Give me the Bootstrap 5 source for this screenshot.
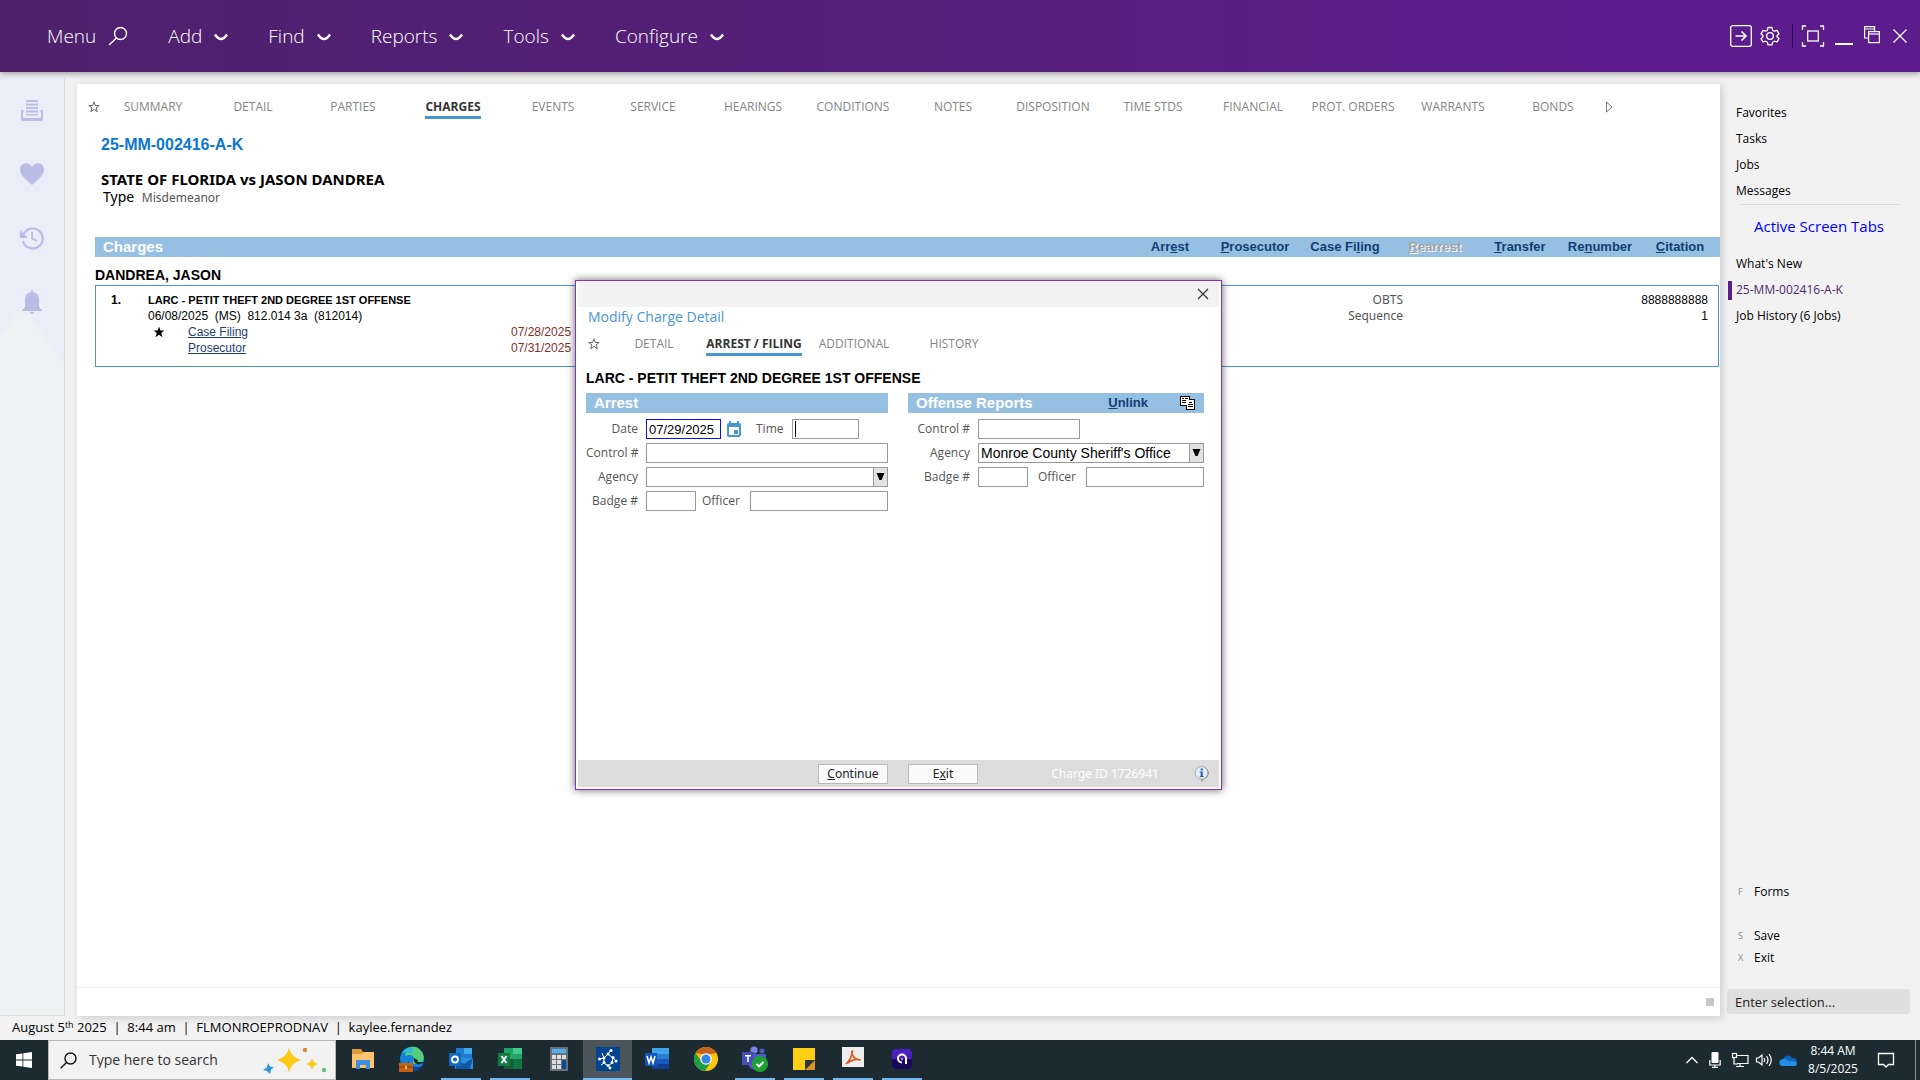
<!DOCTYPE html>
<html lang="en">
<head>
    <meta charset="UTF-8">
    <meta name="viewport" content="width=device-width, initial-scale=1.0">
    <title>Modify Charge Detail</title>
    <link href="https://cdn.jsdelivr.net/npm/bootstrap@5.3.0/dist/css/bootstrap.min.css" rel="stylesheet">
    <style>
        body {
            background-color: #f2f2f2;
            color: #000;
            font-family: "Open Sans", "Noto Sans", sans-serif;
            font-size: 12px;
            line-height: 16px;
        }
        a { color: inherit; text-decoration: none; }
        svg { display: block; flex: none; }
        button { font: inherit; }
        .arial { font-family: "Liberation Sans", Arial, sans-serif; }
        .tahoma { font-family: "Noto Sans", Tahoma, sans-serif; }

        /* top menu */
        .topbar {
            height: 72px;
            padding: 0 13px 0 47px;
            background: linear-gradient(90deg, #4e216c, #541f78 40%, #5c1c8c 85%);
            box-shadow: 0 2px 6px rgba(0, 0, 0, .35);
            color: #fff;
            z-index: 2;
        }
        .menu-link {
            border: 0;
            padding: 0;
            background: none;
            color: #fff;
            font-size: 19px;
            font-weight: 300;
            line-height: 28px;
        }
        .tool-btn { border: 0; padding: 0; background: none; color: #fff; }
        .tool-sep { width: 1px; height: 24px; background: #2b0a66; }

        /* left rail */
        .rail {
            width: 65px;
            margin-top: 6px;
            padding-top: 20px;
            gap: 40px;
            color: #b9bde6;
            border-right: 1px solid #dcdcdc;
            border-bottom: 1px solid #dcdcdc;
            background: conic-gradient(from 144deg at 22px 228px, #eef2f3 72deg, transparent 0), linear-gradient(#ebeef8 300px, #eef2f3 301px);
        }

        /* main sheet */
        .sheet {
            margin: 12px 6px 0 12px;
            background: #fff;
            box-shadow: 2px 2px 8px rgba(0, 0, 0, .16);
            min-width: 0;
        }
        .tabs { color: #858585; }
        .case-tabs { padding-top: 15px; }
        .tab-cell { width: 100px; text-align: center; }
        .tab-cell a { display: inline-block; padding-bottom: 1px; border-bottom: 3px solid transparent; }
        .tab-cell a.current { color: #333; font-weight: 700; border-color: #4a96d2; }
        .case-no { color: #0b78d0; font-size: 16px; line-height: 20px; }
        .style-line { font-size: 15px; line-height: 18px; padding-top: 15px; }
        .type-line { font-size: 14px; line-height: 18px; padding-left: 2px; }
        .type-line span { font-size: 12px; }
        .charges { padding: 30px 0 0 18px; }
        .bluebar { background: #96c0e2; color: #fff; font-weight: 700; font-size: 15px; line-height: 20px; padding-left: 8px; }
        .bar-links { color: #0f3f73; font-size: 13px; text-align: center; }
        .bar-links a { width: 80px; }
        .bar-links a.wide { width: 90px; }
        .bar-links a.off { color: #a5a5a5; text-shadow: 1px 1px 0 #fff; }
        .defendant { font-size: 14px; line-height: 20px; }
        .charge-box { border: 1px solid #4a96d2; height: 82px; margin-right: 1px; padding: 6px 10px 0 15px; }
        .charge-title { font-size: 11px; }
        .charge-link { color: #1d3f70; text-decoration: underline; width: 323px; }
        .charge-date { color: #8b2c2c; }
        .col-num { width: 37px; }
        .col-star { width: 40px; padding-left: 5px; }
        .col-val { width: 305px; }
        .muted-label { color: #555; }
        .sheet-foot { height: 29px; border-top: 1px solid #ececec; padding-right: 6px; }
        .grip { width: 8px; height: 8px; background: #c8c8c8; }

        /* dialog */
        .dialog-layer { top: 196px; left: 0; right: 0; }
        .dlg {
            width: 647px;
            height: 510px;
            border: 1px solid #8d30bd;
            background: #fff;
            box-shadow: 0 0 8px rgba(0, 0, 0, .6);
            padding: 0 2px 2px;
        }
        .dlg-top { background: #f2f2f2; height: 26px; padding-right: 10px; }
        .dlg-title { color: #4a96d2; font-size: 14px; line-height: 20px; padding-left: 10px; }
        .dlg-tabs { padding-top: 9px; }
        .dlg-head { font-size: 14px; line-height: 16px; padding: 14px 0 7px 8px; }
        .pane-left { width: 302px; }
        .pane-right { width: 296px; }
        .dlg .bluebar { margin-bottom: 6px; }
        .f-row { height: 20px; margin-bottom: 4px; }
        .f-label { width: 60px; padding-right: 8px; text-align: right; color: #555; white-space: nowrap; flex: none; }
        .pane-right .f-label { width: 70px; }
        .f-label2 { color: #555; }
        .f-officer { margin: 0 10px; }
        .pane-left .f-officer { margin-left: 6px; }
        .f-cal { margin: 0 7px 0 6px; }
        .f-box {
            height: 20px;
            border: 1px solid #999;
            border-radius: 0;
            background-color: #fff;
            padding: 0 2px;
            font-family: "Liberation Sans", Arial, sans-serif;
            font-size: 14px;
            line-height: 18px;
            color: #000;
            min-width: 0;
            outline: 0;
        }
        .f-date { width: 75px; border-color: #1010d8; font-size: 13px; }
        .f-time { width: 67px; background-image: linear-gradient(#000, #000); background-size: 1px 16px; background-position: 2px 1px; background-repeat: no-repeat; }
        .f-badge { width: 50px; flex: none; }
        .f-ctl { width: 102px; }
        .f-fill { width: 0; }
        .f-drop {
            appearance: none;
            background-repeat: no-repeat;
            background-position: right 0 center;
            background-image: url("data:image/svg+xml,%3Csvg xmlns='http://www.w3.org/2000/svg' width='14' height='18'%3E%3Cpath fill='%23e2e2e2' d='M0 0h14v18H0z'/%3E%3Cpath fill='%23999' d='M0 0h1v18H0z'/%3E%3Cpath d='M3.500 5h8l-3 7h-2z'/%3E%3C/svg%3E");
        }
        .dlg-foot { height: 27px; background: #dcdcdc; }
        .dlg-btn { width: 70px; height: 20px; border: 1px solid #b9b9b9; background: #fafafa; padding: 0; line-height: 18px; color: #222; }
        .foot-mid { gap: 20px; padding-left: 240px; }
        .foot-side { gap: 35px; padding-right: 9px; color: #fff; }

        /* right side */
        .side { width: 194px; padding: 28px 10px 2px 0; }
        .side-item { padding-left: 10px; line-height: 26px; }
        .side-item.current { color: #4c2a6c; }
        .side-item.current::before { content: ""; position: absolute; left: 2px; top: 4px; bottom: 3px; width: 4px; background: #5c1c8c; }
        .side-rule { height: 1px; background: #dcdcdc; margin: 0 10px 0 14px; }
        .side-title { color: #00f; font-size: 15px; line-height: 42px; padding: 0 0 4px 28px; }
        .side-key { width: 16px; color: #8a8a8a; font-size: 9px; }
        .side-keys { padding-left: 12px; line-height: 22px; }
        .side-save { margin-top: 22px; }
        .side-select { border: 0; border-radius: 4px; background: #dfdfdf; height: 25px; padding: 0 8px; margin-left: 1px; font-size: 13px; }
        .side-select::placeholder { color: #222; }

        /* status line and task bar */
        .status { height: 24px; padding-left: 12px; font-size: 13px; line-height: 22px; }
        .status sup { font-size: 9px; top: -4px; line-height: 0; }
        .taskbar { height: 40px; background: #1b2b31; color: #fff; }
        .start { width: 48px; border: 0; background: none; }
        .tb-search { width: 288px; background: #f2f2f2; border: 1px solid #b8b8b8; padding-left: 11px; }
        .tb-search input { border: 0; background: none; font-size: 14px; width: 140px; padding: 0; outline: 0; }
        .tb-search input::placeholder { color: #333; }
        .tb-apps { padding-left: 2px; }
        .tb-app { width: 49px; height: 40px; border: 0; padding: 0 0 2px; background: none; }
        .tb-app.open { background: linear-gradient(#76b9ed, #76b9ed) center bottom / 40px 2px no-repeat; }
        .tb-app.active { background: linear-gradient(#76b9ed, #76b9ed) center bottom / 100% 2px no-repeat #4b545b; }
        .tray { gap: 6px; padding-right: 20px; }
        .clock { line-height: 18px; width: 60px; text-align: center; }
        .tb-edge { width: 5px; border-left: 1px solid #8a9296; }
    </style>
</head>
<body class="vh-100 d-flex flex-column overflow-hidden">
    <!-- Top menu -->
    <header class="topbar d-flex align-items-center justify-content-between">
        <nav class="d-flex align-items-center gap-4" aria-label="Main menu">
            <button class="menu-link d-flex align-items-center gap-2 me-3" type="button">Menu
                <svg class="ms-1" width="20" height="20" viewBox="0 0 20 20" fill="none" stroke="#fff" stroke-width="1.400"><circle cx="12.500" cy="7.500" r="6"/><path d="M8.500 12 1 19"/></svg>
            </button>
            <button class="menu-link d-flex align-items-center gap-2 me-3" type="button">Add <svg class="ms-1" width="14" height="10" viewBox="0 0 14 10" fill="none" stroke="#fff" stroke-width="2.400"><path d="M1 3.500q3 4.500 6 4.500t6-4.500"/></svg></button>
            <button class="menu-link d-flex align-items-center gap-2 me-3" type="button">Find <svg class="ms-1" width="14" height="10" viewBox="0 0 14 10" fill="none" stroke="#fff" stroke-width="2.400"><path d="M1 3.500q3 4.500 6 4.500t6-4.500"/></svg></button>
            <button class="menu-link d-flex align-items-center gap-2 me-3" type="button">Reports <svg class="ms-1" width="14" height="10" viewBox="0 0 14 10" fill="none" stroke="#fff" stroke-width="2.400"><path d="M1 3.500q3 4.500 6 4.500t6-4.500"/></svg></button>
            <button class="menu-link d-flex align-items-center gap-2 me-3" type="button">Tools <svg class="ms-1" width="14" height="10" viewBox="0 0 14 10" fill="none" stroke="#fff" stroke-width="2.400"><path d="M1 3.500q3 4.500 6 4.500t6-4.500"/></svg></button>
            <button class="menu-link d-flex align-items-center gap-2" type="button">Configure <svg class="ms-1" width="14" height="10" viewBox="0 0 14 10" fill="none" stroke="#fff" stroke-width="2.400"><path d="M1 3.500q3 4.500 6 4.500t6-4.500"/></svg></button>
        </nav>
        <div class="d-flex align-items-center gap-2">
            <button class="tool-btn" type="button" aria-label="Sign in"><svg width="22" height="22" viewBox="0 0 22 22" fill="none" stroke="#fff" stroke-width="1.300"><rect x=".7" y=".7" width="20.600" height="20.600" rx="2"/><path stroke-width="1.700" d="M5.500 11h10.500M11.500 6.500 16 11l-4.500 4.500"/></svg></button>
            <button class="tool-btn me-1" type="button" aria-label="Settings"><svg width="20" height="20" viewBox="0 0 20 20" fill="none" stroke="#fff" stroke-width="1.300" stroke-linejoin="round"><path d="M8 1.500h4l.6 2.700 1.700 1 2.700-.8 2 3.400-2 1.900v1l2 1.900-2 3.400-2.700-.8-1.700 1-.6 2.700H8l-.6-2.700-1.700-1-2.700.8-2-3.400 2-1.900v-1L1 7.800l2-3.400 2.700.8 1.700-1z"/><circle cx="10" cy="10" r="3.300"/></svg></button>
            <div class="tool-sep"></div>
            <button class="tool-btn" type="button" aria-label="Full screen"><svg width="24" height="22" viewBox="0 0 24 22" fill="none" stroke="#fff" stroke-width="1.300"><path d="M5 1H1.500v4M19 1h3.500v4M5 21H1.500v-4M19 21h3.500v-4"/><rect x="6.700" y="6" width="10.600" height="10"/></svg></button>
            <button class="tool-btn" type="button" aria-label="Minimize"><svg width="22" height="22" viewBox="0 0 22 22"><path fill="#fff" d="M2 18h18v2H2z"/></svg></button>
            <button class="tool-btn me-1" type="button" aria-label="Restore"><svg width="18" height="20" viewBox="0 0 18 20" fill="none" stroke="#fff" stroke-width="1.200"><path d="M5 12H1.600V.6h10V5M1.600 3h10"/><rect x="5.600" y="5.600" width="10.800" height="11"/><path d="M5.600 8h10.800"/></svg></button>
            <button class="tool-btn" type="button" aria-label="Close"><svg width="14" height="14" viewBox="0 0 14 14" stroke="#fff" stroke-width="1.300"><path d="m.5.5 13 13m0-13-13 13"/></svg></button>
        </div>
    </header>

    <div class="d-flex flex-grow-1">
        <!-- Left rail -->
        <aside class="rail d-flex flex-column align-items-center flex-shrink-0">
            <svg width="24" height="24" viewBox="0 0 24 24" fill="currentColor"><path d="M6 2h12v2H6zM6 5.500h12v2H6zM6 9h12v2H6zM6 12.500h12v2H6zM6 16h12v1.500H6zM1 12h3v1.500H3V20h18v-6.500h-1V12h3v9q0 2-2 2H3q-2 0-2-2z"/></svg>
            <svg width="24" height="24" viewBox="0 0 24 24" fill="currentColor"><path d="M12 23C6 17.500 0 13 0 7.500 0 4 2.800 1.300 6.200 1.300 8.600 1.300 11 2.700 12 4.800c1-2.100 3.400-3.500 5.800-3.500C21.200 1.300 24 4 24 7.500 24 13 18 17.500 12 23z"/></svg>
            <svg width="24" height="24" viewBox="0 0 24 24" fill="none" stroke="currentColor" stroke-width="2.200"><path d="M3.500 8.500A10 10 0 1 1 3 15"/><path fill="currentColor" stroke="none" d="M0 4v8h8z"/><path stroke-width="1.800" d="M12 6v6.500l5 2.500"/></svg>
            <svg width="24" height="24" viewBox="0 0 24 24" fill="currentColor"><path d="M11 0h2v2c4 .7 6 4 6 8v7l3 3v1H2v-1l3-3v-7c0-4 2-7.300 6-8zM9.800 22h4.400q-.5 2-2.200 2t-2.200-2z"/></svg>
        </aside>

        <!-- Case sheet -->
        <main class="sheet flex-grow-1 d-flex flex-column position-relative">
            <nav class="tabs case-tabs d-flex align-items-start" aria-label="Case tabs">
                <svg class="ms-2" width="18" height="16" viewBox="-3 -2 18 16" fill="none" stroke="#666" stroke-width="1"><path d="m6 .8 1.300 3.700h3.900L8.100 6.800l1.200 3.900L6 8.400l-3.300 2.300 1.200-3.900L.8 4.500h3.900z"/></svg>
                <div class="tab-cell"><a href="#">SUMMARY</a></div>
                <div class="tab-cell"><a href="#">DETAIL</a></div>
                <div class="tab-cell"><a href="#">PARTIES</a></div>
                <div class="tab-cell"><a href="#" class="current">CHARGES</a></div>
                <div class="tab-cell"><a href="#">EVENTS</a></div>
                <div class="tab-cell"><a href="#">SERVICE</a></div>
                <div class="tab-cell"><a href="#">HEARINGS</a></div>
                <div class="tab-cell"><a href="#">CONDITIONS</a></div>
                <div class="tab-cell"><a href="#">NOTES</a></div>
                <div class="tab-cell"><a href="#">DISPOSITION</a></div>
                <div class="tab-cell"><a href="#">TIME STDS</a></div>
                <div class="tab-cell"><a href="#">FINANCIAL</a></div>
                <div class="tab-cell"><a href="#">PROT. ORDERS</a></div>
                <div class="tab-cell"><a href="#">WARRANTS</a></div>
                <div class="tab-cell"><a href="#">BONDS</a></div>
                <svg width="12" height="16" viewBox="0 -2 12 16" fill="none" stroke="#777"><path d="M3.500 1v10L9 6z"/></svg>
            </nav>
            <div class="ps-4 pt-3">
                <div class="case-no arial fw-bold">25-MM-002416-A-K</div>
                <div class="style-line tahoma fw-bold">STATE OF FLORIDA vs JASON DANDREA</div>
                <div class="type-line tahoma">Type <span class="muted-label ms-1">Misdemeanor</span></div>
            </div>
            <div class="charges">
                <div class="bluebar arial d-flex justify-content-between">
                    <span>Charges</span>
                    <div class="bar-links d-flex">
                        <a href="#">Arr<u>e</u>st</a>
                        <a href="#" class="wide"><u>P</u>rosecutor</a>
                        <a href="#" class="wide">Case Fi<u>l</u>ing</a>
                        <a href="#" class="wide off"><u>R</u>earrest</a>
                        <a href="#"><u>T</u>ransfer</a>
                        <a href="#">Re<u>n</u>umber</a>
                        <a href="#"><u>C</u>itation</a>
                    </div>
                </div>
                <div class="defendant arial fw-bold pt-2">DANDREA, JASON</div>
                <div class="charge-box arial d-flex">
                    <div class="col-num fw-bold">1.</div>
                    <div class="flex-grow-1">
                        <div class="charge-title fw-bold">LARC - PETIT THEFT 2ND DEGREE 1ST OFFENSE</div>
                        <div>06/08/2025&nbsp; (MS)&nbsp; 812.014 3a&nbsp; (812014)</div>
                        <div class="d-flex">
                            <div class="col-star"><svg width="12" height="16" viewBox="0 -2 12 16"><path d="m6 .5 1.400 4h4.100L8.200 7l1.300 4.200L6 8.700l-3.500 2.500L3.800 7 .5 4.500h4.100z"/></svg></div>
                            <div class="charge-link"><a href="#">Case Filing</a></div>
                            <div class="charge-date">07/28/2025</div>
                        </div>
                        <div class="d-flex">
                            <div class="col-star"></div>
                            <div class="charge-link"><a href="#">Prosecutor</a></div>
                            <div class="charge-date">07/31/2025</div>
                        </div>
                    </div>
                    <div class="muted-label tahoma text-end">OBTS<br>Sequence</div>
                    <div class="col-val text-end">8888888888<br>1</div>
                </div>
            </div>
            <div class="sheet-foot d-flex align-items-center justify-content-end mt-auto"><div class="grip"></div></div>

            <!-- Modify Charge Detail dialog -->
            <div class="dialog-layer position-absolute d-flex justify-content-center">
                <section class="dlg d-flex flex-column" role="dialog" aria-label="Modify Charge Detail">
                    <div class="dlg-top d-flex align-items-center justify-content-end">
                        <button class="tool-btn" type="button" aria-label="Close dialog"><svg width="12" height="12" viewBox="0 0 12 12" stroke="#333" stroke-width="1.200"><path d="m1 1 10 10m0-10L1 11"/></svg></button>
                    </div>
                    <div class="dlg-title">Modify Charge Detail</div>
                    <nav class="tabs dlg-tabs d-flex align-items-start" aria-label="Charge tabs">
                        <svg class="ms-2" width="18" height="16" viewBox="-2 -2 18 16" fill="none" stroke="#666" stroke-width="1"><path d="m6 .8 1.300 3.700h3.900L8.100 6.800l1.200 3.900L6 8.400l-3.300 2.300 1.200-3.900L.8 4.500h3.900z"/></svg>
                        <div class="tab-cell"><a href="#">DETAIL</a></div>
                        <div class="tab-cell"><a href="#" class="current">ARREST / FILING</a></div>
                        <div class="tab-cell"><a href="#">ADDITIONAL</a></div>
                        <div class="tab-cell"><a href="#">HISTORY</a></div>
                    </nav>
                    <div class="dlg-head arial fw-bold">LARC - PETIT THEFT 2ND DEGREE 1ST OFFENSE</div>
                    <div class="d-flex ps-2">
                        <div class="pane-left me-3">
                            <div class="bluebar arial">Arrest</div>
                            <div class="f-row d-flex align-items-center">
                                <label class="f-label" for="a-date">Date</label>
                                <input class="f-box f-date" id="a-date" type="text" value="07/29/2025">
                                <button class="tool-btn f-cal" type="button" aria-label="Pick date"><svg width="14" height="16" viewBox="0 0 14 16"><path fill="#4a96d2" fill-rule="evenodd" d="M2 0h2v2h6V0h2v2q2 0 2 2v10q0 2-2 2H2q-2 0-2-2V4q0-2 2-2zM2 6v8h10V6zM7 9h4v4H7z"/></svg></button>
                                <label class="f-label2 mx-2" for="a-time">Time</label>
                                <input class="f-box f-time" id="a-time" type="text">
                            </div>
                            <div class="f-row d-flex align-items-center">
                                <label class="f-label" for="a-control">Control #</label>
                                <input class="f-box f-fill flex-grow-1" id="a-control" type="text">
                            </div>
                            <div class="f-row d-flex align-items-center">
                                <label class="f-label" for="a-agency">Agency</label>
                                <select class="f-box f-fill f-drop flex-grow-1" id="a-agency"><option></option></select>
                            </div>
                            <div class="f-row d-flex align-items-center">
                                <label class="f-label" for="a-badge">Badge #</label>
                                <input class="f-box f-badge" id="a-badge" type="text">
                                <label class="f-label2 f-officer" for="a-officer">Officer</label>
                                <input class="f-box f-fill flex-grow-1" id="a-officer" type="text">
                            </div>
                        </div>
                        <div class="pane-right ms-1">
                            <div class="bluebar arial d-flex align-items-center">
                                <span class="flex-grow-1">Offense Reports</span>
                                <div class="bar-links me-4"><a href="#"><u>U</u>nlink</a></div>
                                <button class="tool-btn mx-2" type="button" aria-label="Copy reports"><svg width="16" height="16" viewBox="0 0 16 16" shape-rendering="crispEdges"><path d="M0 1h10v10H0zM6 4h9v11H6z"/><path fill="#fff" d="M1 2h8v8H1zM7 5h7v9H7z"/><path d="M2 3h2v1H2zM5 3h3v1H5zM2 5h4v1H2zM2 7h4v1H2zM9 7h3v1H9zM8 9h5v1H8zM8 11h5v1H8z"/></svg></button>
                            </div>
                            <div class="f-row d-flex align-items-center">
                                <label class="f-label" for="o-control">Control #</label>
                                <input class="f-box f-ctl" id="o-control" type="text">
                            </div>
                            <div class="f-row d-flex align-items-center">
                                <label class="f-label" for="o-agency">Agency</label>
                                <select class="f-box f-fill f-drop flex-grow-1" id="o-agency"><option>Monroe County Sheriff's Office</option></select>
                            </div>
                            <div class="f-row d-flex align-items-center">
                                <label class="f-label" for="o-badge">Badge #</label>
                                <input class="f-box f-badge" id="o-badge" type="text">
                                <label class="f-label2 f-officer" for="o-officer">Officer</label>
                                <input class="f-box f-fill flex-grow-1" id="o-officer" type="text">
                            </div>
                        </div>
                    </div>
                    <div class="dlg-foot tahoma d-flex align-items-center justify-content-between mt-auto">
                        <div class="foot-mid d-flex">
                            <button class="dlg-btn" type="button"><u>C</u>ontinue</button>
                            <button class="dlg-btn" type="button">E<u>x</u>it</button>
                        </div>
                        <div class="foot-side d-flex align-items-center">
                            <span>Charge ID 1726941</span>
                            <svg width="16" height="16" viewBox="0 0 16 16"><path fill="#777" d="M7 1a6 6 0 0 1 3 12l-3 3 1-3A6 6 0 0 1 8 1z"/><circle cx="7.500" cy="6.800" r="6.300" fill="#e8ecf6" stroke="#aab0c4"/><path fill="#1c5fb8" d="M6.700 2.500h2v2h-2zM5.700 5.500h3v4.500h1v1h-4v-1h1V6.500h-1z"/></svg>
                        </div>
                    </div>
                </section>
            </div>
        </main>

        <!-- Right side -->
        <aside class="side d-flex flex-column flex-shrink-0">
            <a class="side-item" href="#">Favorites</a>
            <a class="side-item" href="#">Tasks</a>
            <a class="side-item" href="#">Jobs</a>
            <a class="side-item" href="#">Messages</a>
            <div class="side-rule"></div>
            <div class="side-title">Active Screen Tabs</div>
            <a class="side-item" href="#">What's New</a>
            <a class="side-item current position-relative" href="#">25-MM-002416-A-K</a>
            <a class="side-item" href="#">Job History (6 Jobs)</a>
            <a class="side-keys mt-auto d-flex align-items-center" href="#"><span class="side-key">F</span>Forms</a>
            <a class="side-keys side-save d-flex align-items-center" href="#"><span class="side-key">S</span>Save</a>
            <a class="side-keys d-flex align-items-center mb-3" href="#"><span class="side-key">X</span>Exit</a>
            <input class="side-select mt-1" type="text" placeholder="Enter selection..." aria-label="Enter selection">
        </aside>
    </div>

    <!-- Status line -->
    <footer class="status">August 5<sup>th</sup> 2025&nbsp; |&nbsp; 8:44 am&nbsp; |&nbsp; FLMONROEPRODNAV&nbsp; |&nbsp; kaylee.fernandez</footer>

    <!-- Task bar -->
    <div class="taskbar d-flex align-items-stretch">
        <button class="start d-flex align-items-center justify-content-center" type="button" aria-label="Start"><svg width="16" height="16" viewBox="0 0 16 16" fill="#fff"><path d="M0 2.300 6.500 1.400v6.100H0zM7.300 1.300 16 0v7.500H7.300zM0 8.400h6.500v6.200L0 13.700zM7.300 8.400H16V16l-8.700-1.300z"/></svg></button>
        <div class="tb-search d-flex align-items-center">
            <svg class="me-2" width="17" height="17" viewBox="0 0 17 17" fill="none" stroke="#111" stroke-width="1.400"><circle cx="10.500" cy="6.500" r="5.500"/><path d="M6.500 10.500.7 16.300"/></svg>
            <input class="ms-1" type="text" placeholder="Type here to search" aria-label="Search">
            <svg class="ms-auto me-2" width="64" height="28" viewBox="0 0 64 28"><path fill="#fbc916" d="M26 2q2 9 12 12-10 3-12 12-2-9-12-12 10-3 12-12zM49 12q1 5 6 6-5 1-6 6-1-5-6-6 5-1 6-6z"/><path fill="#2f93e0" d="m5 17 2 3.500 4 1-3 2-1 4.500-3-3-4-1 4-2.500z"/><circle cx="42" cy="4" r="2.200" fill="#d28a30"/><circle cx="61" cy="24" r="2.200" fill="#5cc86a"/></svg>
        </div>
        <div class="tb-apps d-flex flex-grow-1">
            <button class="tb-app d-flex align-items-center justify-content-center" type="button" aria-label="Explorer"><svg width="22" height="22" viewBox="0 0 22 22"><path fill="#e09a3a" d="M0 1h9l2 3h11v5H0z"/><path fill="#ffc46b" d="M0 6h10l2-2h10v16H0z"/><path fill="#3b8fe0" d="M4 12h14v9h-4v-4H8v4H4z"/></svg></button>
            <button class="tb-app d-flex align-items-center justify-content-center" type="button" aria-label="Edge"><svg width="26" height="26" viewBox="0 0 26 26"><circle cx="13" cy="13" r="12" fill="#1482d8"/><path fill="#55cf7b" d="M8 2q10-4 15 4c4 7 1 12-6 12-4 0-4-2-2-4 1-5-5-6-9-4z"/><path fill="#2db9dc" d="M3 7Q7 0 15 2q-3 2-1 6-6-3-11-1z"/><path fill="#1b2b31" d="M15 12q4 1 4 4h6q-3 3-7 2-4-1-3-6z"/><path fill="#0c4493" d="M10 12q-2 6 3 8t10 0q-4 6-11 5.500-5-4-2-13.500z"/><rect y="17" width="14" height="9" fill="#c4600f"/><path fill="#7e3208" d="M0 20.500h14v1H0z"/><path fill="#ffc46b" d="M6 20h2v3H6z"/></svg></button>
            <button class="tb-app open d-flex align-items-center justify-content-center" type="button" aria-label="Outlook"><svg width="24" height="24" viewBox="0 0 24 24"><path fill="#1d7bd0" d="M7 1h16v11H7z"/><path fill="#42a8f0" d="M15 1h8v6h-8z"/><path fill="#2a8fe3" d="M6 11h18v11H6z"/><path fill="#1259a5" d="m24 11-9 6-8-5v10h14z"/><rect y="6" width="12" height="13" fill="#0f6ac0"/><circle cx="6" cy="12.500" r="3" fill="none" stroke="#fff" stroke-width="1.800"/></svg></button>
            <button class="tb-app open d-flex align-items-center justify-content-center" type="button" aria-label="Excel"><svg width="24" height="24" viewBox="0 0 24 24"><path fill="#21a366" d="M6 1h18v21H6z"/><path fill="#3fca88" d="M15 1h9v6h-9z"/><path fill="#185c37" d="M6 12h9v10H6z"/><path fill="#12743f" d="M15 12h9v10h-9z"/><rect y="6" width="12" height="13" fill="#107c41"/><path stroke="#fff" stroke-width="1.800" d="m3.500 9 5 7m0-7-5 7"/></svg></button>
            <button class="tb-app d-flex align-items-center justify-content-center" type="button" aria-label="Calculator"><svg width="18" height="24" viewBox="0 0 18 24"><rect width="18" height="24" rx="1" fill="#6b7177"/><path fill="#50b0f5" d="M2 2h14v4H2z"/><path fill="#ddd" d="M2 8h4v4H2zM7 8h4v4H7zM12 8h4v4h-4zM2 13h4v4H2zM7 13h4v4H7zM2 18h4v4H2zM7 18h4v4H7z"/><path fill="#0a4d92" d="M12 13h4v9h-4z"/></svg></button>
            <button class="tb-app active d-flex align-items-center justify-content-center" type="button" aria-label="Court records"><svg width="24" height="24" viewBox="0 0 24 24"><path fill="#00438f" d="M0 0h24v24H0z"/><path fill="none" stroke="#fff" stroke-width="1" d="m15 3-3 4 5 4 3 3M12 7l-4 4-5 1M8 11v5l4 3 2 2M17 11l-1 5-4 3M8 16l-3 2M6 6l2 5"/><g fill="#fff"><circle cx="15" cy="3.500" r="1.600"/><circle cx="12" cy="7" r="1.500"/><circle cx="17" cy="10.500" r="1.600"/><circle cx="8" cy="11" r="1.500"/><circle cx="3.500" cy="12" r="1.500"/><circle cx="20" cy="14" r="1.500"/><circle cx="8" cy="15.500" r="1.500"/><circle cx="16" cy="15.500" r="1.500"/><circle cx="12" cy="18.500" r="1.600"/><circle cx="14" cy="21" r="1.400"/></g></svg></button>
            <button class="tb-app d-flex align-items-center justify-content-center" type="button" aria-label="Word"><svg width="24" height="24" viewBox="0 0 24 24"><path fill="#2b7cd3" d="M7 1h17v21H7z"/><path fill="#41a5ee" d="M7 1h17v6H7z"/><path fill="#185abd" d="M7 12h17v5H7z"/><path fill="#103f91" d="M7 17h17v5H7z"/><rect y="6" width="12" height="13" fill="#1156b8"/><path fill="none" stroke="#fff" stroke-width="1.500" d="m2 9 2 7 2-6 2 6 2-7"/></svg></button>
            <button class="tb-app d-flex align-items-center justify-content-center" type="button" aria-label="Chrome"><svg width="24" height="24" viewBox="0 0 24 24"><circle cx="12" cy="12" r="12" fill="#fdc60d"/><path fill="#c8601c" d="M1.600 6A12 12 0 0 1 22.400 6L12 8z"/><path fill="#1f9c43" d="M1.600 6A12 12 0 0 0 11 24l5-8-8-1z"/><circle cx="12" cy="12" r="5.800" fill="#fff"/><circle cx="12" cy="12" r="4.500" fill="#2f86e8"/></svg></button>
            <button class="tb-app open d-flex align-items-center justify-content-center" type="button" aria-label="Teams"><svg width="26" height="26" viewBox="0 0 26 26"><circle cx="12" cy="4" r="3.600" fill="#7b83eb"/><circle cx="20" cy="5" r="2.600" fill="#4f58c0"/><path fill="#5059c9" d="M6 8h18v8q-2 8-9 8t-9-6z"/><rect y="6" width="12" height="13" fill="#4650b4"/><path fill="#fff" d="M3 9h6v1.500H6.800V16H5.200v-5.500H3z"/><circle cx="18" cy="18" r="8" fill="#1fa136"/><path fill="none" stroke="#fff" stroke-width="1.800" d="m14.500 18 2.500 2.500 4.500-4.500"/></svg></button>
            <button class="tb-app open d-flex align-items-center justify-content-center" type="button" aria-label="Sticky Notes"><svg width="22" height="22" viewBox="0 0 22 22"><path fill="#fdcf12" d="M0 0h22v12L12 22H0z"/><path fill="#dc9720" d="m22 12-10 10h10z"/><path fill="#2e3338" d="M12 12h10L12 22z"/></svg></button>
            <button class="tb-app open d-flex align-items-center justify-content-center" type="button" aria-label="Acrobat"><svg class="mb-1" width="22" height="20" viewBox="0 0 22 20"><path fill="#ededed" d="M0 0h22v20H0z"/><path fill="none" stroke="#d8581f" stroke-width="1.600" d="M4 17q5-4 6.500-13c-2 0 0 9 8 9-4-1.500-9 0-13 3"/></svg></button>
            <button class="tb-app open d-flex align-items-center justify-content-center" type="button" aria-label="Capture"><svg width="20" height="20" viewBox="0 0 20 20"><rect width="20" height="20" rx="4" fill="#4a1fc0"/><path fill="#1a0858" d="M0 10h20v6q0 4-4 4H4q-4 0-4-4z"/><path fill="none" stroke="#fff" stroke-width="2" d="M10 13.500A4 4 0 1 1 14 9.500V15"/><path fill="none" stroke="#fff" stroke-width="1.500" d="M10 9.500v1.500"/></svg></button>
        </div>
        <div class="tray d-flex align-items-center">
            <svg width="14" height="10" viewBox="0 0 14 10" fill="none" stroke="#fff" stroke-width="1.300"><path d="m1.500 8 5.500-5.500L12.500 8"/></svg>
            <svg class="ms-1" width="12" height="16" viewBox="0 0 12 16" fill="#fff"><rect x="2.500" width="7" height="11" rx="1"/><path fill="none" stroke="#fff" stroke-width="1.200" d="M.8 8v5h10.400V8M6 13v2M3 15.300h6"/></svg>
            <svg class="ms-1" width="18" height="16" viewBox="0 0 18 16" fill="none" stroke="#fff" stroke-width="1.200"><path d="M6 3.500h11v8H6M5 14.500h8M9 11.500v3M3 6v6h4"/><rect x="1.500" y="1.500" width="4" height="4"/></svg>
            <svg width="18" height="16" viewBox="0 0 18 16" fill="none" stroke="#fff" stroke-width="1.200"><path d="M1.500 6v4h2L7 13V3L3.500 6zM9 6q1.500 2 0 4M11.500 4q3 4 0 8M14 2q4.500 6 0 12"/></svg>
            <svg width="18" height="12" viewBox="0 0 18 12"><path fill="#0f63bd" d="M4 5a5 5 0 0 1 9-1q5 0 5 4H2z"/><path fill="#2690e8" d="M3 12a3.300 3.300 0 0 1 0-6.500Q5 4 8 6l3 1.500q2-1.500 4 0 3-.5 3 2T15.500 12z"/></svg>
            <div class="clock">8:44 AM<br>8/5/2025</div>
            <svg class="ms-2" width="18" height="18" viewBox="0 0 18 18" fill="none" stroke="#fff" stroke-width="1.300"><path d="M1.500 2.500h15v11h-5L9 16l-2.500-2.500h-5z"/></svg>
        </div>
        <div class="tb-edge"></div>
    </div>

    <script src="https://cdn.jsdelivr.net/npm/bootstrap@5.3.0/dist/js/bootstrap.bundle.min.js"></script>
</body>
</html>
